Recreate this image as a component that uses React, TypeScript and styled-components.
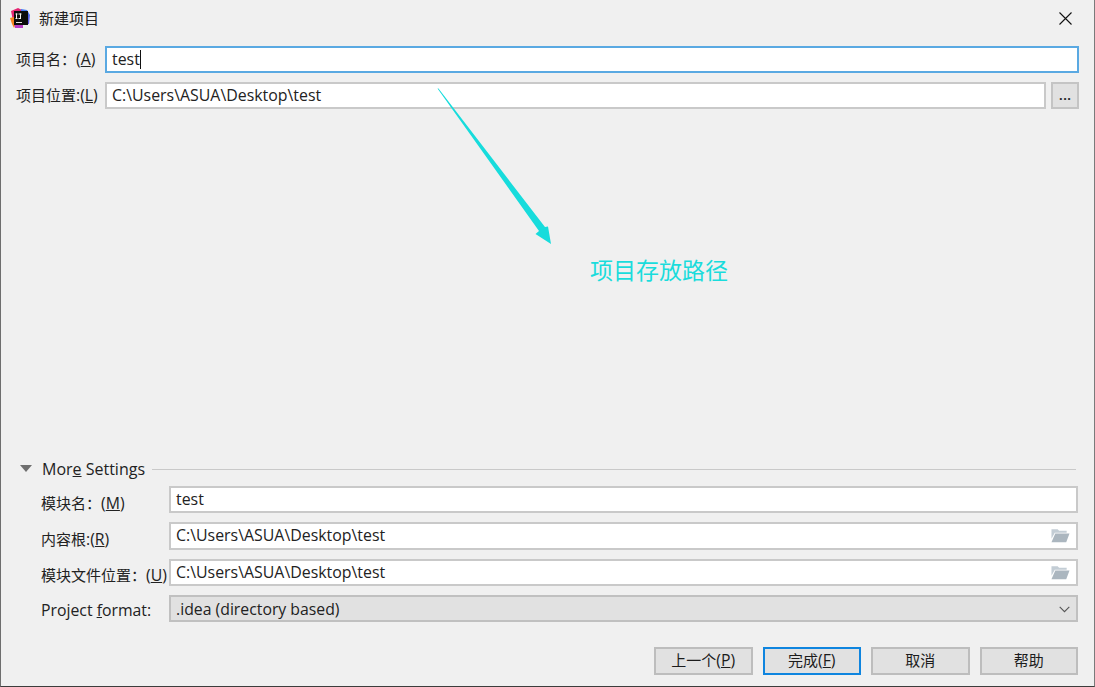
import React from "react";
import styled, { createGlobalStyle } from "styled-components";

const Global = createGlobalStyle`
  html, body { margin: 0; padding: 0; background: #f0f0f0; }
  body { font-family: "Open Sans", "Noto Sans CJK SC", sans-serif; }
`;

const FONT = `"Open Sans", "Noto Sans CJK SC", sans-serif`;

const Window = styled.div`
  position: relative;
  box-sizing: border-box;
  width: 1095px;
  height: 687px;
  background: #f0f0f0;
  border-left: 1px solid #6e6e6e;
  border-right: 1px solid #7a7a7a;
  border-bottom: 1px solid #3c3c3c;
  display: flex;
  flex-direction: column;
  overflow: hidden;
  font-family: ${FONT};
  font-size: 15px;
  color: #1c1c1c;
`;

const TitleBar = styled.div`
  height: 38px;
  flex: none;
  display: flex;
  align-items: center;
  padding: 0 22px 0 8px;
  gap: 8px;
  font-size: 15px;
  color: #222;
`;

const TitleText = styled.span`
  flex: 1;
  line-height: 38px;
  margin-top: -2px;
`;

const TopForm = styled.div`
  display: flex;
  flex-direction: column;
  gap: 8.5px;
  padding: 8px 15px 0 15px;
`;

const Row = styled.div<{ $label: number }>`
  display: grid;
  grid-template-columns: ${(p) => p.$label}px 1fr;
  align-items: center;
  height: 27.4px;
`;

const Label = styled.label<{ $drop: number }>`
  white-space: nowrap;
  line-height: 20px;
  color: #222;
  margin-top: ${(p) => p.$drop * 2}px;
`;

const Latin = styled.span`
  font-size: 15.8px;
`;

const Field = styled.div<{ $focus?: boolean }>`
  box-sizing: border-box;
  height: 100%;
  display: flex;
  align-items: center;
  padding: 0 5px;
  background: #fff;
  border: 2px solid ${(p) => (p.$focus ? "#5aa9e2" : "#c9c9c9")};
  white-space: nowrap;
  line-height: 20px;
  font-size: 15.9px;
  color: #222;
`;

const FieldText = styled.span<{ $lift: number }>`
  flex: 1;
  margin-top: -${(p) => p.$lift}px;
`;

const Caret = styled.span`
  display: inline-block;
  width: 1px;
  height: 19px;
  background: #111;
  vertical-align: -4px;
`;

const PathRow = styled.div`
  display: grid;
  grid-template-columns: 1fr 28px;
  gap: 5px;
  height: 100%;
`;

const BrowseButton = styled.button`
  box-sizing: border-box;
  height: 100%;
  padding: 0 0 2px;
  border: 2px solid #c4c4c4;
  background: #e1e1e1;
  font-family: ${FONT};
  font-size: 15px;
  font-weight: 600;
  color: #222;
  line-height: 1;
`;

const Spacer = styled.div`
  flex: 1;
`;

const SectionHeader = styled.div`
  display: flex;
  align-items: center;
  padding: 0 18px 0 19px;
  height: 20px;
  font-size: 16px;
  color: #222;
`;

const Triangle = styled.span`
  width: 0;
  height: 0;
  border-left: 6px solid transparent;
  border-right: 6px solid transparent;
  border-top: 7px solid #6f6f6f;
  margin-right: 10px;
`;

const SectionLine = styled.span`
  flex: 1;
  height: 1px;
  background: #c9c9c9;
  margin-left: 7px;
  margin-top: 1px;
`;

const LowerForm = styled.div`
  display: flex;
  flex-direction: column;
  gap: 9px;
  padding: 7px 16px 0 40px;
`;

const SelectBox = styled.div`
  box-sizing: border-box;
  height: 100%;
  display: flex;
  align-items: center;
  padding: 0 6px 0 5px;
  background: #e1e1e1;
  border: 2px solid #c0c0c0;
  line-height: 20px;
  font-size: 15.8px;
  color: #222;
`;

const Footer = styled.div`
  display: flex;
  justify-content: flex-end;
  gap: 10px;
  padding: 25px 16px 11px 0;
`;

const DialogButton = styled.button<{ $primary?: boolean }>`
  box-sizing: border-box;
  width: 98.5px;
  height: 27.6px;
  padding: 0 0 2px;
  background: #e1e1e1;
  border: 2px solid ${(p) => (p.$primary ? "#0f85df" : "#bdbdbd")};
  font-family: ${FONT};
  font-size: 15px;
  line-height: 20px;
  color: #1c1c1c;
`;

const CloseIcon = styled.svg`
  width: 13px;
  height: 13px;
  flex: none;
  margin-top: -1px;
`;

const AnnotationArrow = styled.svg`
  position: absolute;
  left: 429px;
  top: 85px;
  pointer-events: none;
`;

const AnnotationText = styled.div`
  position: absolute;
  left: 589px;
  top: 253px;
  font-size: 23px;
  line-height: 34px;
  color: #1adcdc;
  white-space: nowrap;
`;

const FolderSvg = styled.svg`
  flex: none;
  margin-right: 1px;
`;

const ChevronSvg = styled.svg`
  flex: none;
  margin-top: 1px;
`;

const LogoSvg = styled.svg`
  flex: none;
  margin-top: -3px;
`;

const Logo = () => (
  <LogoSvg width="22" height="22" viewBox="0 0 22 22">
    <defs>
      <linearGradient id="lg1" x1="0" y1="0" x2="1" y2="1">
        <stop offset="0" stopColor="#f0286e" />
        <stop offset="1" stopColor="#c81e7d" />
      </linearGradient>
      <linearGradient id="lg2" x1="0" y1="0" x2="0" y2="1">
        <stop offset="0" stopColor="#3f7cf4" />
        <stop offset="1" stopColor="#6b4de0" />
      </linearGradient>
    </defs>
    <polygon points="2,4 9,1 15,4 15,14 4,14" fill="url(#lg1)" />
    <polygon points="1,11 5,10 7,16 5,21 3,17" fill="#f7841f" />
    <polygon points="12,2 18,3 21,8 20,17 12,18" fill="url(#lg2)" />
    <polygon points="5,16 14,16 14,21 6,21" fill="#b83bc6" />
    <rect x="5" y="4" width="14" height="14" fill="#0c0c0c" />
    <rect x="7" y="15" width="6" height="1" fill="#e8e8e8" />
    <rect x="7" y="6.5" width="1" height="5.5" fill="#f5f5f5" />
    <rect x="6.5" y="6.5" width="2" height="1" fill="#f5f5f5" />
    <rect x="6.5" y="11" width="2" height="1" fill="#f5f5f5" />
    <rect x="11" y="6.5" width="1" height="5.5" fill="#f5f5f5" />
    <rect x="9.5" y="6.5" width="3" height="1" fill="#f5f5f5" />
    <rect x="9.5" y="11" width="2" height="1" fill="#f5f5f5" />
  </LogoSvg>
);

const FolderIcon = () => (
  <FolderSvg width="19" height="15" viewBox="0 0 20 15">
    <path d="M0.5 1 H7 L8.5 2.5 H16.5 V4.5 H4 L0.5 11 Z" fill="#c3cdd5" />
    <path d="M4.5 5.5 H19.5 L16 14.5 H0.5 Z" fill="#abb6bf" />
  </FolderSvg>
);

const ChevronIcon = () => (
  <ChevronSvg width="11" height="7" viewBox="0 0 11 7">
    <path d="M0.7 0.8 L5.5 5.6 L10.3 0.8" fill="none" stroke="#555" strokeWidth="1.1" />
  </ChevronSvg>
);

export default function App() {
  return (
    <Window>
      <Global />
      <TitleBar>
        <Logo />
        <TitleText>新建项目</TitleText>
        <CloseIcon viewBox="0 0 13 13">
          <path d="M0.5 0.5 L12.5 12.5 M12.5 0.5 L0.5 12.5" stroke="#111" strokeWidth="1.1" fill="none" />
        </CloseIcon>
      </TitleBar>

      <TopForm>
        <Row $label={89}>
          <Label $drop={-1}>项目名：<Latin>(<u>A</u>)</Latin></Label>
          <Field $focus>
            <FieldText $lift={2}>test<Caret /></FieldText>
          </Field>
        </Row>
        <Row $label={89}>
          <Label $drop={-1}>项目位置<Latin>:(<u>L</u>)</Latin></Label>
          <PathRow>
            <Field>
              <FieldText $lift={2}>C:\Users\ASUA\Desktop\test</FieldText>
            </Field>
            <BrowseButton>...</BrowseButton>
          </PathRow>
        </Row>
      </TopForm>

      <Spacer />

      <SectionHeader>
        <Triangle />
        <span>Mor<u>e</u> Settings</span>
        <SectionLine />
      </SectionHeader>

      <LowerForm>
        <Row $label={128}>
          <Label $drop={3}>模块名：<Latin>(<u>M</u>)</Latin></Label>
          <Field>
            <FieldText $lift={1}>test</FieldText>
          </Field>
        </Row>
        <Row $label={128}>
          <Label $drop={3}>内容根<Latin>:(<u>R</u>)</Latin></Label>
          <Field>
            <FieldText $lift={1}>C:\Users\ASUA\Desktop\test</FieldText>
            <FolderIcon />
          </Field>
        </Row>
        <Row $label={128}>
          <Label $drop={3}>模块文件位置：<Latin>(<u>U</u>)</Latin></Label>
          <Field>
            <FieldText $lift={1}>C:\Users\ASUA\Desktop\test</FieldText>
            <FolderIcon />
          </Field>
        </Row>
        <Row $label={128}>
          <Label $drop={1}><Latin>Project <u>f</u>ormat:</Latin></Label>
          <SelectBox>
            <FieldText $lift={0}>.idea (directory based)</FieldText>
            <ChevronIcon />
          </SelectBox>
        </Row>
      </LowerForm>

      <Footer>
        <DialogButton>上一个<Latin>(<u>P</u>)</Latin></DialogButton>
        <DialogButton $primary>完成<Latin>(<u>F</u>)</Latin></DialogButton>
        <DialogButton>取消</DialogButton>
        <DialogButton>帮助</DialogButton>
      </Footer>

      <AnnotationArrow width="130" height="165" viewBox="430 85 130 165">
        <polygon points="437.5,88.5 438.5,88.5 545,227 548,226.5 551,244 535.5,234 539,231" fill="#17dcdc" />
      </AnnotationArrow>
      <AnnotationText>项目存放路径</AnnotationText>
    </Window>
  );
}
